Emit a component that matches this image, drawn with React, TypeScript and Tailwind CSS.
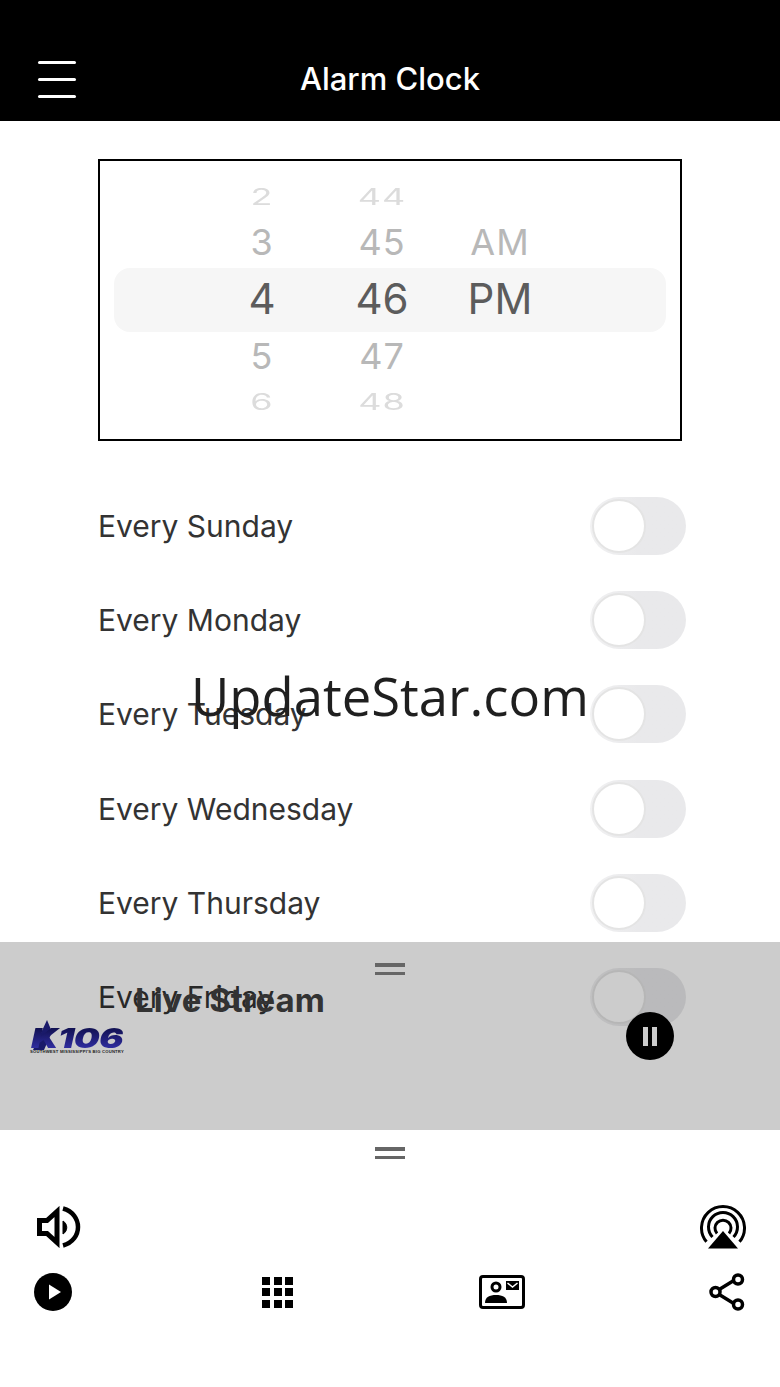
import React from "react";

const days = ["Sunday", "Monday", "Tuesday", "Wednesday", "Thursday", "Friday"];

const Toggle = () => (
  <div className="flex h-[58px] w-[96px] items-center rounded-full bg-gradient-to-r from-[#f1f1f2] to-[#e9e9eb] to-50% pl-[2px]">
    <div className="h-[54px] w-[54px] rounded-full border-2 border-[#e4e4e4] bg-white" />
  </div>
);

const Handle = () => (
  <div className="flex w-[30px] flex-col gap-[5px]">
    <div className="h-[3.5px] bg-[#666]" />
    <div className="h-[3.5px] bg-[#666]" />
  </div>
);

const rowHeights = ["h-[34px]", "h-[56px]", "h-[58px]", "h-[56px]", "h-[36px]"];
const rowStyles = [
  "scale-y-[0.62] text-[36px] tracking-[1px] text-[#dcdcdc]",
  "text-[36px] tracking-[1px] text-[#b8b8b8]",
  "text-[42px] text-[#5c5c5c]",
  "text-[36px] tracking-[1px] text-[#b8b8b8]",
  "scale-y-[0.62] text-[36px] tracking-[1px] text-[#dcdcdc]",
];

const Wheel = ({ items, width }: { items: string[]; width: string }) => (
  <div className={`flex flex-col items-center ${width}`}>
    {items.map((item, i) => (
      <div
        key={i}
        className={`flex items-center justify-center leading-none ${rowHeights[i]} ${rowStyles[i]}`}
      >
        {item}
      </div>
    ))}
  </div>
);

const Speaker = () => (
  <svg width="44" height="42" viewBox="0 0 44 42" fill="none" stroke="#000">
    <path d="M2.5 14.5H10L20 5.5V36.5L10 27.5H2.5Z" strokeWidth="5" />
    <path d="M26 15C31 18 31 25 26 28Z" fill="#000" strokeWidth="1" />
    <path d="M26 2.5C46 8 46 34 26 39.5" strokeWidth="4.5" />
  </svg>
);

const AirPlay = () => (
  <svg width="46" height="44" viewBox="0 0 46 44" fill="none" stroke="#000" strokeWidth="3">
    <path d="M6.5 36.8A21.5 21.5 0 1 1 39.5 36.8" />
    <path d="M12.5 32A14.5 14.5 0 1 1 33.5 32" />
    <path d="M17 28.5A8 8 0 1 1 29 28.5" />
    <path d="M23 26L38 43.5H8Z" fill="#000" stroke="none" />
  </svg>
);

const PlayCircle = () => (
  <svg width="38" height="38" viewBox="0 0 38 38">
    <circle cx="19" cy="19" r="19" fill="#000" />
    <path d="M15 11.5L27 19L15 26.5Z" fill="#fff" />
  </svg>
);

const GridIcon = () => (
  <div className="grid w-[31px] grid-cols-3 gap-[3.5px]">
    {Array.from({ length: 9 }).map((_, i) => (
      <div key={i} className="h-[8px] w-[8px] bg-black" />
    ))}
  </div>
);

const ContactCard = () => (
  <svg width="46" height="34" viewBox="0 0 46 34" fill="none">
    <rect x="1.5" y="1.5" width="43" height="31" rx="2.5" stroke="#000" strokeWidth="3" />
    <circle cx="17" cy="12" r="4" stroke="#000" strokeWidth="3" />
    <path d="M6 28C6 22 10.5 20 17 20C23.5 20 28 22 28 28Z" fill="#000" />
    <rect x="27" y="6" width="13" height="9" fill="#000" />
    <path d="M28.5 8L33.5 12L38.5 8" stroke="#fff" strokeWidth="1.5" />
  </svg>
);

const ShareIcon = () => (
  <svg width="36" height="38" viewBox="0 0 36 38" fill="none" stroke="#000" strokeWidth="3.5">
    <path d="M11 16L24 8M11 22L24 30" />
    <circle cx="6.5" cy="19" r="4.5" />
    <circle cx="29" cy="6.5" r="4.5" />
    <circle cx="29" cy="31.5" r="4.5" />
  </svg>
);

// station logo, text kept as text with a gradient fill
const StationLogo = () => (
  <div className="flex w-[95px] flex-col">
    <div className="relative h-[30px] w-[95px]">
      <svg className="absolute left-0 top-0" width="28" height="30" viewBox="0 0 28 30">
        <path d="M3 30L17 0L22 12L14 30Z" fill="#1a1a6a" />
      </svg>
      <div className="absolute left-[1px] top-[7px] origin-top-left scale-x-[1.35] bg-gradient-to-b from-[#10104e] to-[#3330a8] bg-clip-text text-[27px] font-black italic leading-[23px] tracking-[-0.5px] text-transparent">
        K106
      </div>
    </div>
    <div className="whitespace-nowrap font-['Liberation_Sans'] text-[4.2px] font-bold leading-[4px] tracking-[0.2px] text-[#222]">
      SOUTHWEST MISSISSIPPI'S BIG COUNTRY
    </div>
  </div>
);

export default function App() {
  return (
    <div className="relative flex h-[1387px] w-[780px] flex-col overflow-hidden bg-white font-['Inter',sans-serif]">
      <header className="grid h-[121px] grid-cols-[1fr_auto_1fr] items-center bg-black pt-[37px] text-white">
        <div className="ml-[38px] flex w-[38px] flex-col gap-[14px]">
          <div className="h-[3px] rounded-full bg-white" />
          <div className="h-[3px] rounded-full bg-white" />
          <div className="h-[3px] rounded-full bg-white" />
        </div>
        <div className="text-[31px] font-medium leading-[36px]">Alarm Clock</div>
        <div />
      </header>

      <main className="flex flex-col px-[98px] pt-[38px]">
        <div className="relative flex h-[282px] w-[584px] justify-start border-2 border-black pl-[102px] pt-[19px]">
          <div className="absolute left-[14px] top-[107px] h-[64px] w-[552px] rounded-[16px] bg-[#f6f6f6]" />
          <div className="relative flex">
            <Wheel items={["2", "3", "4", "5", "6"]} width="w-[120px]" />
            <Wheel items={["44", "45", "46", "47", "48"]} width="w-[120px]" />
            <Wheel items={["", "AM", "PM", "", ""]} width="w-[116px]" />
          </div>
        </div>

        <div className="mt-[38px] flex w-[588px] flex-col">
          {days.map((day) => (
            <div key={day} className="flex h-[94.2px] items-center justify-between">
              <span className="text-[30px] leading-[36px] text-[#333]">Every {day}</span>
              <Toggle />
            </div>
          ))}
        </div>
      </main>

      {/* watermark */}
      <div className="absolute left-[191px] top-[661px] font-['Open_Sans'] text-[52.6px] leading-[70px] text-[#1f1f1f]">
        UpdateStar.com
      </div>

      {/* player sheet, sits over the list */}
      <div className="absolute left-0 top-[942px] flex h-[188px] w-[780px] flex-col bg-black/20">
        <div className="flex justify-center pt-[21px]">
          <Handle />
        </div>
        <div className="mt-[6px] pl-[135px] text-[33px] font-bold leading-[38px] text-[#333]">Live Stream</div>
        <div className="-mt-[7px] flex items-start justify-between pl-[30px] pr-[106px]">
          <div className="mt-[8px]">
            <StationLogo />
          </div>
          <div className="flex h-[48px] w-[48px] items-center justify-center gap-[4px] rounded-full bg-black">
            <div className="h-[19px] w-[5px] bg-[#ccc]" />
            <div className="h-[19px] w-[5px] bg-[#ccc]" />
          </div>
        </div>
      </div>

      {/* bottom controls */}
      <div className="absolute bottom-0 left-0 flex h-[257px] w-[780px] flex-col">
        <div className="flex justify-center pt-[17px]">
          <Handle />
        </div>
        <div className="mt-[46px] flex items-center justify-between pl-[37px] pr-[34px]">
          <Speaker />
          <AirPlay />
        </div>
        <div className="mt-[24px] flex items-center justify-between px-[25px]">
          <div className="flex w-[56px] justify-center"><PlayCircle /></div>
          <div className="flex w-[56px] justify-center"><GridIcon /></div>
          <div className="flex w-[56px] justify-center"><ContactCard /></div>
          <div className="flex w-[56px] justify-center"><ShareIcon /></div>
        </div>
      </div>
    </div>
  );
}
